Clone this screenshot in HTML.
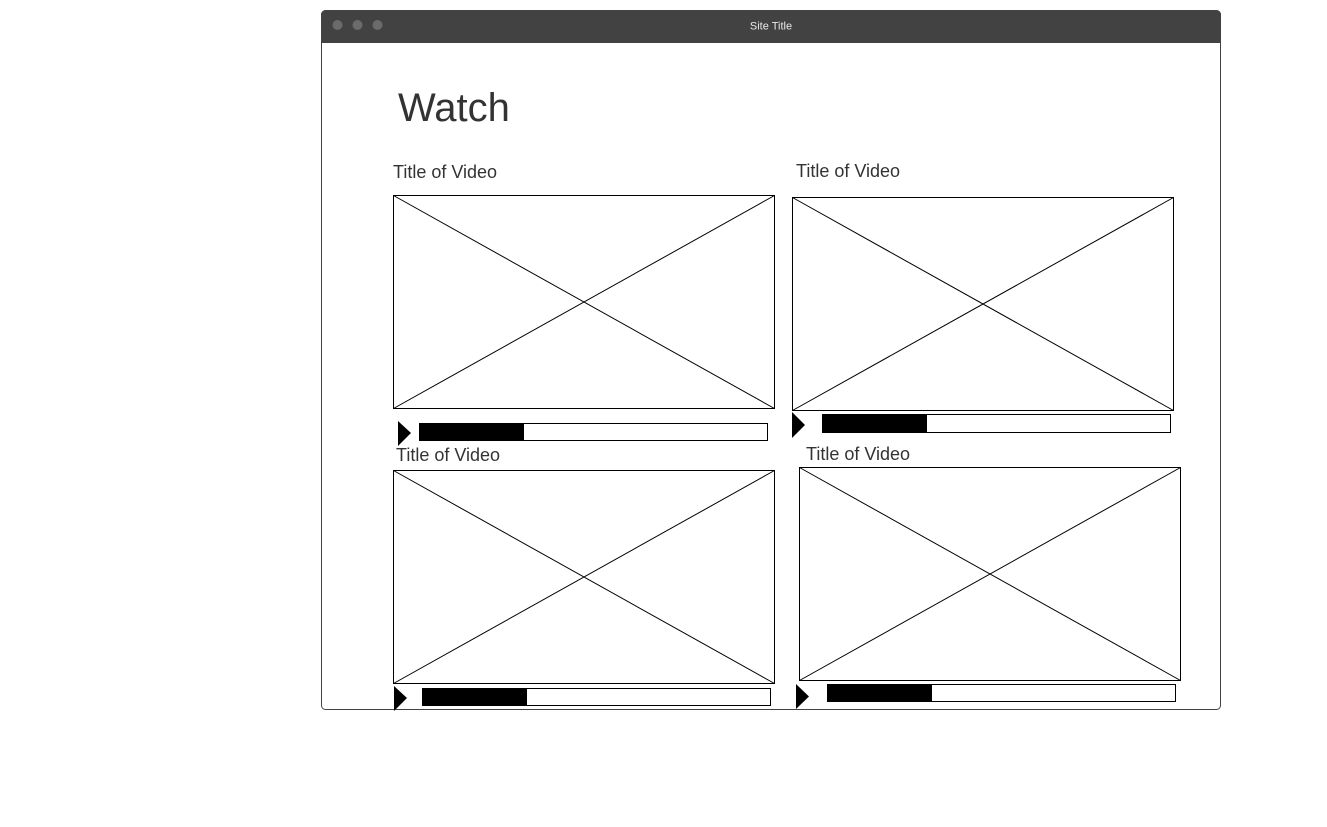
<!DOCTYPE html>
<html><head><meta charset="utf-8"><style>
html,body{margin:0;padding:0;background:#fff;width:1327px;height:827px;overflow:hidden;font-family:"Liberation Sans",sans-serif;}
svg{position:absolute;left:0;top:0}
</style></head><body>
<svg width="1327" height="827" viewBox="0 0 1327 827" xmlns="http://www.w3.org/2000/svg" font-family="Liberation Sans, sans-serif">
<rect x="321.5" y="10.5" width="899" height="699" rx="4" fill="#fff" stroke="#424242"/>
<path d="M321 43 V15 a5 5 0 0 1 5 -5 H1216 a5 5 0 0 1 5 5 V43 Z" fill="#424242"/>
<circle cx="337.5" cy="25" r="5" fill="#6b6b6b"/>
<circle cx="357.5" cy="25" r="5" fill="#6b6b6b"/>
<circle cx="377.5" cy="25" r="5" fill="#6b6b6b"/>
<text x="771" y="29.5" font-size="11" fill="#e8e8e8" text-anchor="middle">Site Title</text>
<text x="398" y="121" font-size="40" fill="#333">Watch</text>
<g font-size="18" fill="#333">
<text x="393" y="178">Title of Video</text>
<text x="796" y="177">Title of Video</text>
<text x="396" y="461">Title of Video</text>
<text x="806" y="460">Title of Video</text>
</g>
<g fill="none" stroke="#000" stroke-width="1">
<rect x="393.5" y="195.5" width="381" height="213"/>
<path d="M393.5 195.5 L774.5 408.5 M774.5 195.5 L393.5 408.5"/>
<rect x="792.5" y="197.5" width="381" height="213"/>
<path d="M792.5 197.5 L1173.5 410.5 M1173.5 197.5 L792.5 410.5"/>
<rect x="393.5" y="470.5" width="381" height="213"/>
<path d="M393.5 470.5 L774.5 683.5 M774.5 470.5 L393.5 683.5"/>
<rect x="799.5" y="467.5" width="381" height="213"/>
<path d="M799.5 467.5 L1180.5 680.5 M1180.5 467.5 L799.5 680.5"/>
<rect x="419.5" y="423.5" width="348" height="17"/>
<rect x="822.5" y="414.5" width="348" height="18"/>
<rect x="422.5" y="688.5" width="348" height="17"/>
<rect x="827.5" y="684.5" width="348" height="17"/>
</g>
<g fill="#000">
<rect x="419" y="423" width="105" height="18"/>
<rect x="822" y="414" width="105" height="19"/>
<rect x="422" y="688" width="105" height="18"/>
<rect x="827" y="684" width="105" height="18"/>
<path d="M398 421 L411 433 L398 446 Z"/>
<path d="M792 412 L805 425 L792 438 Z"/>
<path d="M394 686 L407 698 L394 711 Z"/>
<path d="M796 684 L809 696.5 L796 709 Z"/>
</g>
</svg>
</body></html>
